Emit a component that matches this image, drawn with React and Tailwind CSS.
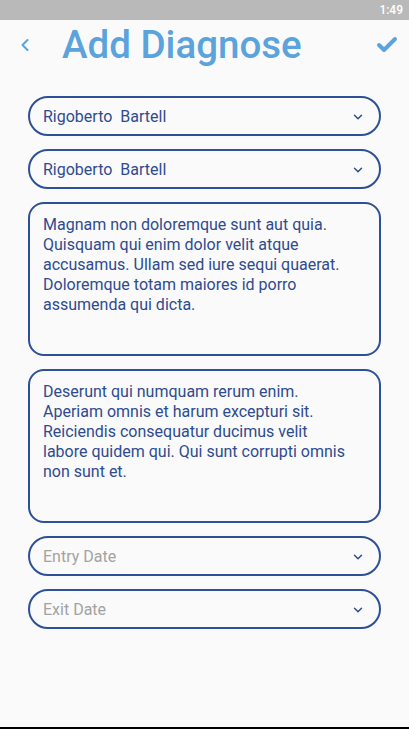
import { ChevronLeft, ChevronDown, Check } from "lucide-react";

const font = { fontFamily: "Roboto, 'Noto Sans', sans-serif" };

function Select({ value, placeholder }) {
  return (
    <div className="flex h-[40px] items-center justify-between rounded-full border-2 border-[#2d5097] pl-[13px] pr-[14px] pt-[1px]">
      <span className={`whitespace-pre text-[16px] ${value ? "text-[#2e4b8f]" : "text-[#a3a3a3]"}`}>
        {value || placeholder}
      </span>
      <ChevronDown className="h-[14px] w-[14px] text-[#2e4b8f]" strokeWidth={2.5} />
    </div>
  );
}

function TextBox({ lines }) {
  return (
    <div className="h-[154px] rounded-[16px] border-2 border-[#2d5097] px-[13px] pt-[11px]">
      <p className="text-[16px] leading-[20px] text-[#2e4b8f]">
        {lines.map((l, i) => (
          <span key={i} className="block whitespace-nowrap">{l}</span>
        ))}
      </p>
    </div>
  );
}

export default function App() {
  return (
    <div className="flex h-[729px] flex-col bg-[#fafafa]" style={font}>
      {/* Status bar */}
      <div className="flex h-[20px] items-center justify-end bg-[#b9b9b9] pr-[6px]">
        <span className="text-[12px] font-medium text-white">1:49</span>
      </div>

      {/* Header */}
      <div className="flex h-[50px] items-center pl-[15px] pr-[10px]">
        <ChevronLeft className="h-[20px] w-[20px] text-[#5ba3dd]" strokeWidth={2.5} />
        <h1 className="ml-[27px] flex-1 text-[38.5px] font-medium leading-none text-[#5ba3dd]">
          Add Diagnose
        </h1>
        <Check className="h-[24px] w-[24px] text-[#5ba3dd]" strokeWidth={4} />
      </div>

      {/* Form */}
      <div className="flex flex-col gap-[13px] px-[28px] pt-[26px]">
        <Select value="Rigoberto  Bartell" />
        <Select value="Rigoberto  Bartell" />
        <TextBox
          lines={[
            "Magnam non doloremque sunt aut quia.",
            "Quisquam qui enim dolor velit atque",
            "accusamus. Ullam sed iure sequi quaerat.",
            "Doloremque totam maiores id porro",
            "assumenda qui dicta.",
          ]}
        />
        <TextBox
          lines={[
            "Deserunt qui numquam rerum enim.",
            "Aperiam omnis et harum excepturi sit.",
            "Reiciendis consequatur ducimus velit",
            "labore quidem qui. Qui sunt corrupti omnis",
            "non sunt et.",
          ]}
        />
        <Select placeholder="Entry Date" />
        <Select placeholder="Exit Date" />
      </div>

      <div className="flex-1" />
      <div className="h-[2px] bg-black" />
    </div>
  );
}
